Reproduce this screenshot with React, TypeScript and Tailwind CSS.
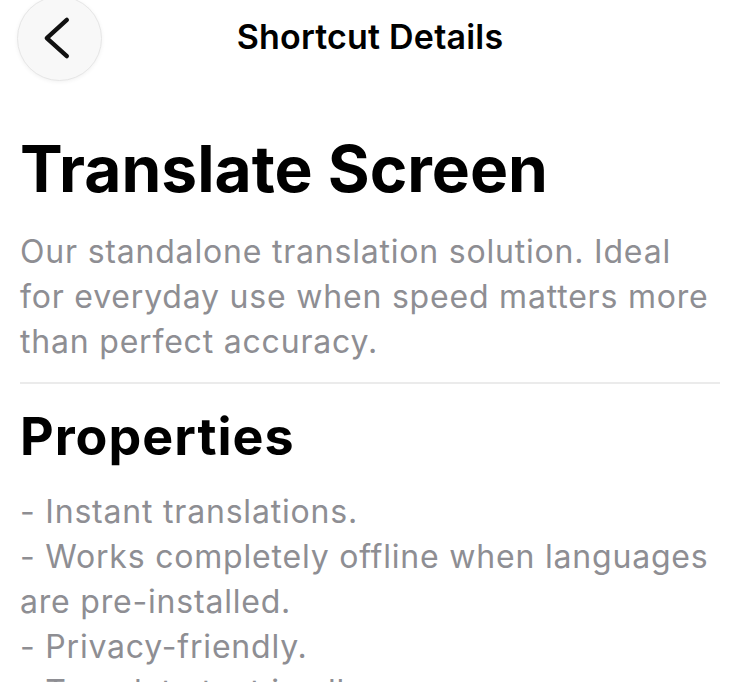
import React from "react";

const font = { fontFamily: "Inter, 'Noto Sans', 'Liberation Sans', sans-serif" };

export default function App() {
  return (
    <div
      className="w-[740px] h-[682px] overflow-hidden bg-white text-black"
      style={font}
    >
      <header className="grid grid-cols-[1fr_auto_1fr] grid-rows-[76px] items-center">
        <div className="pl-[17px]">
          <button className="w-[85px] h-[85px] rounded-full bg-[#f8f8f8] border border-[#e6e6e6] shadow-[0_1px_4px_rgba(0,0,0,0.06)] flex items-center justify-center">
            <svg width="85" height="85" viewBox="0 0 85 85" fill="none">
              <path
                d="M50 23.5 L29.5 42 L50 60.5"
                stroke="#111"
                strokeWidth="4.5"
                strokeLinecap="round"
                strokeLinejoin="round"
              />
            </svg>
          </button>
        </div>
        <h1 className="pb-[3px] text-[34px] font-semibold tracking-[0.2px] leading-none">
          Shortcut Details
        </h1>
        <div />
      </header>

      <main className="px-5">
        <h2 className="mt-[61px] text-[64px] font-bold leading-none tracking-[0px]">
          Translate Screen
        </h2>
        <p className="mt-[28px] text-[32px] leading-[45px] text-[#8e8e93] tracking-[0.8px]">
          Our standalone translation solution. Ideal for everyday use when speed matters more than perfect accuracy.
        </p>
        <div className="mt-[18px] h-[2px] bg-[#ebebeb]" />
        <h3 className="mt-[27px] text-[52px] font-bold leading-none tracking-[1px]">
          Properties
        </h3>
        <div className="mt-[26px] text-[32px] leading-[45px] text-[#8e8e93] tracking-[0.8px]">
          <p>- Instant translations.</p>
          <p>- Works completely offline when languages are pre-installed.</p>
          <p>- Privacy-friendly.</p>
          <p>- Translate text in all apps.</p>
        </div>
      </main>
    </div>
  );
}
